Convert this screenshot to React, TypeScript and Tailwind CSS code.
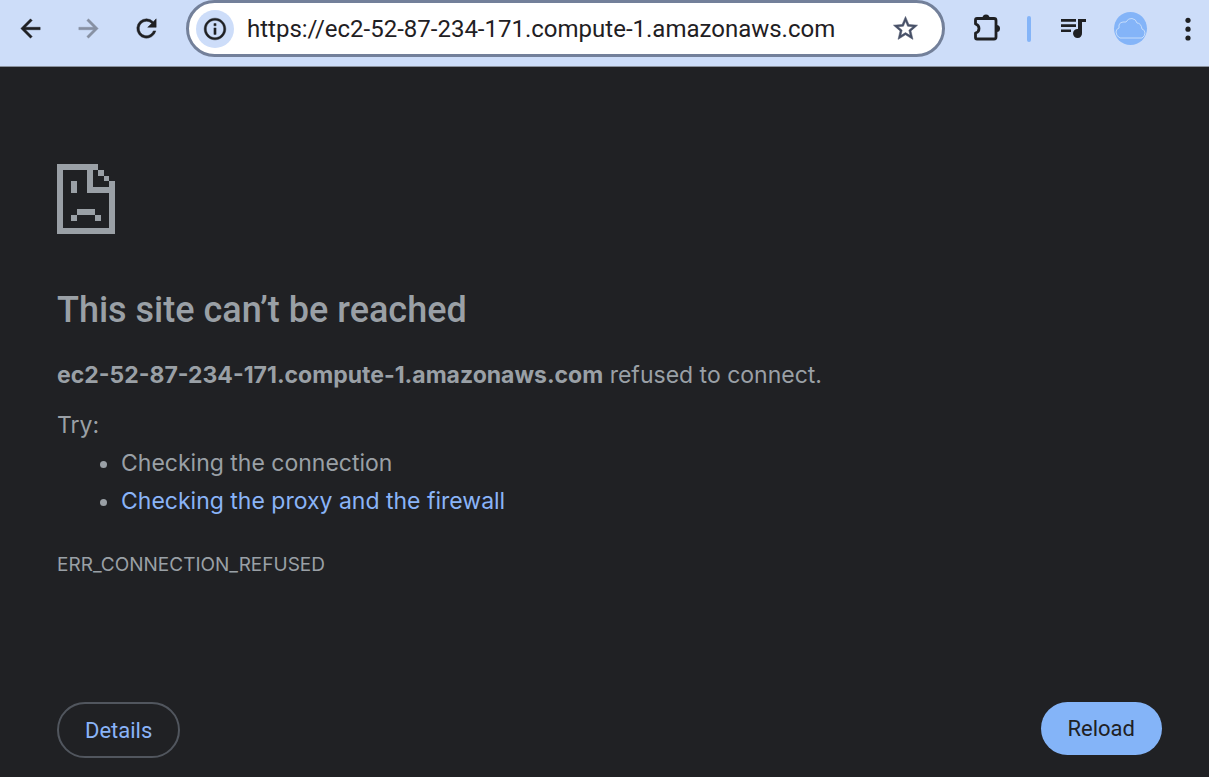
import React from "react";

type IconProps = { d: string; className?: string };

function Icon({ d, className = "" }: IconProps) {
  return (
    <svg viewBox="0 0 24 24" fill="currentColor" stroke="currentColor" strokeWidth="0.4" className={className} aria-hidden="true">
      <path d={d} />
    </svg>
  );
}

function SadFileIcon() {
  return (
    <svg viewBox="0 0 174 210" className="h-[70px] w-[58px]" fill="#9aa0a6" shapeRendering="crispEdges" aria-hidden="true">
      <path d="M0 0H123V17H107V68H156V52H174V210H0ZM17 17V193H156V86H90V17Z" fillRule="evenodd" />
      <path d="M123 17H140V35H123ZM140 35H156V52H140Z" />
      <path d="M42 52H60V86H42ZM60 136H114V153H60ZM42 153H60V170H42ZM114 153H131V170H114Z" />
    </svg>
  );
}

function Toolbar() {
  return (
    <header className="flex h-[67px] items-start border-b border-[#8a919d] bg-[#cdddf9] pr-[5px] pl-4 text-[#1f2023]">
      <div className="flex h-[57px] shrink-0 items-center gap-[29px]">
        <button type="button" aria-label="Back">
          <Icon className="size-[29px]" d="M20 11H7.83l5.590-5.590L12 4l-8 8 8 8 1.410-1.410L7.830 13H20v-2z" />
        </button>
        <button type="button" aria-label="Forward" className="text-[#8790a3]">
          <Icon className="size-[29px]" d="M12 4l-1.410 1.410L16.170 11H4v2h12.170l-5.580 5.590L12 20l8-8z" />
        </button>
        <button type="button" aria-label="Reload page">
          <Icon className="size-[29px]" d="M17.650 6.350A7.960 7.960 0 0 0 12 4a8 8 0 1 0 7.730 10h-2.080A6 6 0 1 1 12 6c1.660 0 3.140.690 4.220 1.780L13 11h7V4z" />
        </button>
      </div>
      <div className="ml-[25px] flex h-[57px] min-w-0 flex-1 items-center rounded-full border-[3px] border-[#73809a] bg-white pr-[22px] pl-[7px]">
        <button type="button" aria-label="View site information" className="flex size-[38px] shrink-0 items-center justify-center rounded-full bg-[#cdddf9]">
          <Icon className="size-[26px]" d="M11 7h2v2h-2zm0 4h2v6h-2zm1-9C6.480 2 2 6.480 2 12s4.480 10 10 10 10-4.480 10-10S17.520 2 12 2zm0 18c-4.410 0-8-3.590-8-8s3.590-8 8-8 8 3.590 8 8-3.590 8-8 8z" />
        </button>
        <input
          type="text"
          aria-label="Address"
          defaultValue="https://ec2-52-87-234-171.compute-1.amazonaws.com"
          className="ml-[13px] min-w-0 flex-1 bg-transparent font-['Roboto',sans-serif] text-[24px] outline-none"
        />
        <button type="button" aria-label="Bookmark this page" className="text-[#475067]">
          <Icon className="size-[29px]" d="M22 9.240l-7.190-.620L12 2 9.190 8.630 2 9.240l5.460 4.730L5.820 21 12 17.270 18.180 21l-1.630-7.030L22 9.240zM12 15.400l-3.760 2.270 1-4.280-3.320-2.880 4.380-.380L12 6.100l1.710 4.040 4.380.380-3.320 2.880 1 4.280L12 15.400z" />
        </button>
      </div>
      <div className="ml-[25px] flex h-[57px] shrink-0 items-center">
        <button type="button" aria-label="Extensions">
          <svg viewBox="0 0 32 32" className="size-8" aria-hidden="true">
            <path d="M7 5.500H24Q26 5.500 26 7.500V24Q26 26 24 26H7Q5.500 26 5.500 24.500V20Q9 19 9 15.500T5.500 11V7Q5.500 5.500 7 5.500Z" fill="none" stroke="currentColor" strokeWidth="2.800" strokeLinejoin="round" />
            <path d="M12.500 5a3.500 3.500 0 0 1 7 0ZM26.500 12a3.500 3.500 0 0 1 0 7Z" fill="currentColor" />
          </svg>
        </button>
        <span className="ml-[25px] h-[26px] w-1 rounded-full bg-[#84b4f8]" />
        <button type="button" aria-label="Media controls" className="ml-[27px]">
          <svg viewBox="0 0 32 32" className="size-8" fill="currentColor" aria-hidden="true">
            <path d="M3 6H18V8.700H3ZM3 11.200H18V13.900H3ZM3 16.400H13V19.100H3ZM20 6H28V9H24V20A4.500 4.500 0 1 1 20 16Z" />
          </svg>
        </button>
        <button type="button" aria-label="Profile" className="ml-[24px] rounded-full bg-[#84b4f8]">
          <svg viewBox="0 0 33 33" className="size-[33px]" fill="none" stroke="#c5dcfb" aria-hidden="true">
            <path d="M6 26Q2 24 2 20Q2 17 5 16V13Q6 10 9 10H12Q14 6 18 6.500Q22 7 23 11Q27 11 28 17Q31 18 31 21Q31 24 28 26Z" />
          </svg>
        </button>
        <button type="button" aria-label="Menu" className="ml-[25px]">
          <svg viewBox="0 0 32 32" className="size-8" fill="currentColor" aria-hidden="true">
            <circle cx="16" cy="7.300" r="2.600" /><circle cx="16" cy="16.200" r="2.600" /><circle cx="16" cy="25" r="2.600" />
          </svg>
        </button>
      </div>
    </header>
  );
}

export default function App() {
  return (
    <div className="flex min-h-screen flex-col bg-[#202124] font-['Inter',sans-serif] text-[#9aa0a6]">
      <Toolbar />
      <main className="flex flex-1 flex-col pt-[97px] pr-[47px] pb-[19px] pl-[57px]">
        <SadFileIcon />
        <h1 className="mt-[52px] font-['Roboto',sans-serif] text-[36px] leading-[48px] font-medium">This site can’t be reached</h1>
        <p className="mt-[22px] text-[23px] leading-[38px]">
          <strong className="font-bold">ec2-52-87-234-171.compute-1.amazonaws.com</strong> refused to connect.
        </p>
        <p className="mt-3 text-[23px] leading-[38px]">Try:</p>
        <ul className="list-disc pl-16 text-[23px] leading-[38px]">
          <li>Checking the connection</li>
          <li><a href="#buttons" className="text-[#8ab4f8]">Checking the proxy and the firewall</a></li>
        </ul>
        <p className="mt-[28px] text-[19px] leading-[34px]">ERR_CONNECTION_REFUSED</p>
        <div id="buttons" className="mt-auto flex items-start justify-between font-['Roboto',sans-serif] text-[22px]">
          <button type="button" className="h-14 rounded-full border-2 border-[#51565e] px-[26px] text-[#8ab4f8]">Details</button>
          <button type="button" className="h-[53px] rounded-full bg-[#84b4f8] px-[27px] text-[#202124]">Reload</button>
        </div>
      </main>
    </div>
  );
}
